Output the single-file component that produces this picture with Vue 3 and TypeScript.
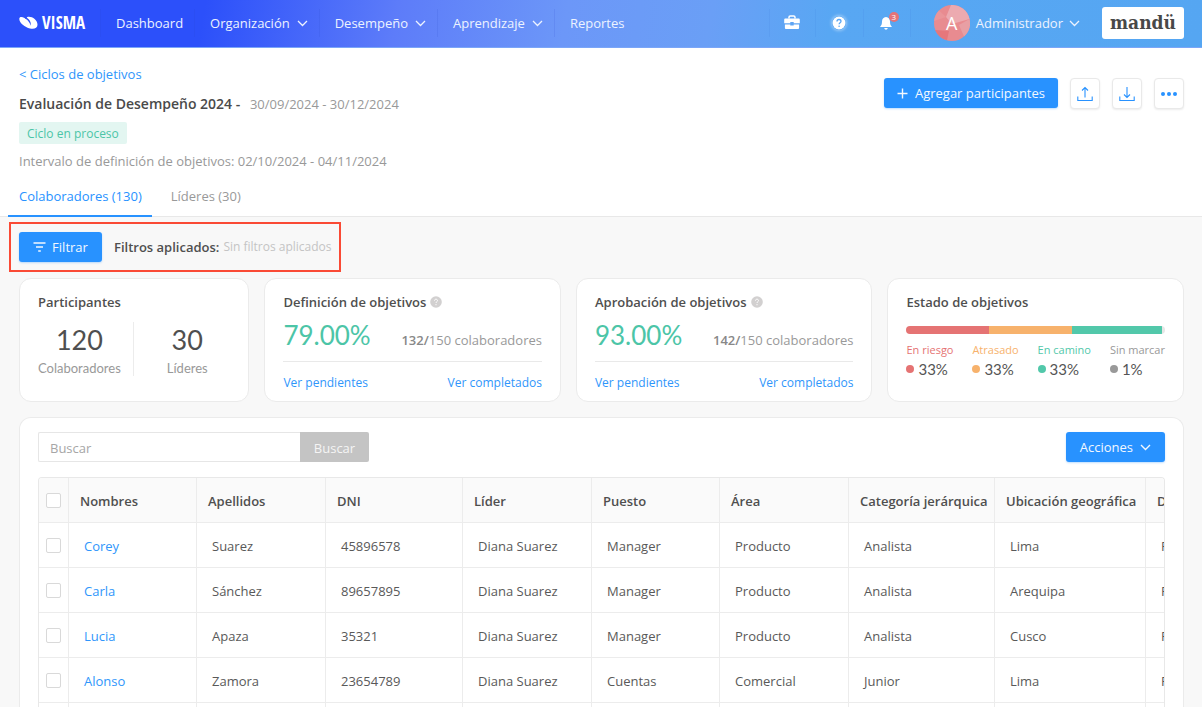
<script setup lang="ts">
import { ref } from 'vue'

interface NavItem { label: string; menu: boolean }
interface Goal { title: string; percent: string; done: number; total: number }
interface Status { label: string; value: number; share: number; tone: string }
interface Person { nombres: string; rest: string[] }

const nav: NavItem[] = [
  { label: 'Dashboard', menu: false },
  { label: 'Organización', menu: true },
  { label: 'Desempeño', menu: true },
  { label: 'Aprendizaje', menu: true },
  { label: 'Reportes', menu: false },
]

const goals: Goal[] = [
  { title: 'Definición de objetivos', percent: '79.00%', done: 132, total: 150 },
  { title: 'Aprobación de objetivos', percent: '93.00%', done: 142, total: 150 },
]

const statuses: Status[] = [
  { label: 'En riesgo', value: 33, share: 32, tone: 'red' },
  { label: 'Atrasado', value: 33, share: 32, tone: 'orange' },
  { label: 'En camino', value: 33, share: 35, tone: 'green' },
  { label: 'Sin marcar', value: 1, share: 1, tone: 'gray' },
]

const columns: string[] = [
  'Nombres', 'Apellidos', 'DNI', 'Líder', 'Puesto', 'Área',
  'Categoría jerárquica', 'Ubicación geográfica', 'D',
]

const people: Person[] = [
  { nombres: 'Corey', rest: ['Suarez', '45896578', 'Diana Suarez', 'Manager', 'Producto', 'Analista', 'Lima', 'P'] },
  { nombres: 'Carla', rest: ['Sánchez', '89657895', 'Diana Suarez', 'Manager', 'Producto', 'Analista', 'Arequipa', 'P'] },
  { nombres: 'Lucia', rest: ['Apaza', '35321', 'Diana Suarez', 'Manager', 'Producto', 'Analista', 'Cusco', 'P'] },
  { nombres: 'Alonso', rest: ['Zamora', '23654789', 'Diana Suarez', 'Cuentas', 'Comercial', 'Junior', 'Lima', 'P'] },
]

const search = ref('')
</script>

<template>
  <div class="page">
    <header class="topbar">
      <a class="brand" href="#">
        <svg width="19" height="14" viewBox="0 0 19 14" aria-hidden="true">
          <path d="M.3 3C.3.7 2.800.5 5.500 2.100L7.300 3.300 8 1.200C12-.3 18.500 3.500 18.500 8.800 18.500 12.200 15 13.500 11 12.500 6 11.300.3 7 .3 3z" fill="#fff" />
          <path d="M6.800 1.200C10.800 3.400 12.700 6.700 11.400 9.700 11.200 7 9.600 4.700 6 2.200z" fill="#2c50fa" />
        </svg>
        <span>VISMA</span>
      </a>
      <nav class="nav">
        <a v-for="item in nav" :key="item.label" class="nav-item" href="#">
          {{ item.label }}
          <svg v-if="item.menu" class="chevron" width="11" height="7" viewBox="0 0 11 7"><path d="M1 1l4.500 4.500L10 1" /></svg>
        </a>
      </nav>
      <div class="tools">
        <button class="tool" aria-label="Empresa">
          <svg width="16" height="15" viewBox="0 0 16 15">
            <path d="M5 3.500V2.300C5 1.500 5.500 1 6.300 1h3.400c.8 0 1.300.5 1.300 1.300v1.200" fill="none" stroke="#fff" stroke-width="1.500" />
            <path d="M1.500 3.500h13c.8 0 1.300.5 1.300 1.300v3.400H9.700V7H6.300v1.200H.2V4.800c0-.8.5-1.300 1.300-1.300zM.9 9.400h5.400v1h3.400v-1h5.400v3.300c0 .8-.5 1.300-1.300 1.300H2.200c-.8 0-1.300-.5-1.300-1.300z" fill="#fff" />
          </svg>
        </button>
        <button class="tool" aria-label="Ayuda">
          <svg class="help" width="14" height="14" viewBox="0 0 14 14">
            <circle cx="7" cy="7" r="6.500" fill="#fff" />
            <path d="M5 5.400C5 4.200 5.900 3.500 7 3.500s2 .7 2 1.800C9 6.700 7.100 6.700 7.100 8.300" fill="none" stroke="#5aa5f3" stroke-width="1.300" />
            <circle cx="7.100" cy="10.300" r=".8" fill="#5aa5f3" />
          </svg>
        </button>
        <button class="tool bell" aria-label="Notificaciones">
          <svg width="13" height="14" viewBox="0 0 13 14">
            <path d="M6 1c2.700.2 4 2 4 4.500 0 2.900.6 3.800 2 5.500H0c1.400-1.700 2-2.600 2-5.500C2 3 3.300 1.200 6 1zM4.300 12h3.400c-.1 1.100-.8 1.700-1.700 1.700S4.400 13.100 4.300 12z" fill="#fff" />
          </svg>
          <span class="count">3</span>
        </button>
      </div>
      <button class="user">
        <span class="avatar">
          <svg width="36" height="36" viewBox="0 0 36 36" aria-hidden="true">
            <circle cx="18" cy="18" r="18" fill="#e88b90" />
            <path d="M17 0A18 18 0 0 1 35.500 14L18 19 12 12z" fill="#ecaab0" />
            <path d="M25 20l10.500-6A18 18 0 0 1 30 31.500z" fill="#e89fa4" />
            <path d="M1 25l14 1-2 9.300A18 18 0 0 1 1 25z" fill="#e5777c" />
            <path d="M0 16L12 12 5 5.500A18 18 0 0 0 0 16z" fill="#ea9599" />
          </svg>
          <span class="initial">A</span>
        </span>
        Administrador
        <svg class="chevron" width="11" height="7" viewBox="0 0 11 7"><path d="M1 1l4.500 4.500L10 1" /></svg>
      </button>
      <span class="client">mandü</span>
    </header>

    <section class="head">
      <div class="intro">
        <a class="back" href="#">&lt; Ciclos de objetivos</a>
        <h1>Evaluación de Desempeño 2024 - <span>30/09/2024 - 30/12/2024</span></h1>
        <span class="tag">Ciclo en proceso</span>
        <p>Intervalo de definición de objetivos: 02/10/2024 - 04/11/2024</p>
      </div>
      <div class="actions">
        <button class="primary add">
          <svg width="11" height="11" viewBox="0 0 11 11"><path d="M5.500 .5v10M.5 5.500h10" /></svg>
          Agregar participantes
        </button>
        <button class="square" aria-label="Subir">
          <svg width="16" height="16" viewBox="0 0 16 16"><path d="M8 11.500V1.500M5 4.500l3-3 3 3M.8 10.500v4h14.400v-4" /></svg>
        </button>
        <button class="square" aria-label="Descargar">
          <svg width="16" height="16" viewBox="0 0 16 16"><path d="M8 1v10.500M5 8.500l3 3 3-3M.8 10.500v4h14.400v-4" /></svg>
        </button>
        <button class="square dots" aria-label="Más opciones">
          <svg width="16" height="4" viewBox="0 0 16 4"><circle cx="2" cy="2" r="2" /><circle cx="8" cy="2" r="2" /><circle cx="14" cy="2" r="2" /></svg>
        </button>
      </div>
    </section>

    <nav class="tabs">
      <a class="tab active" href="#">Colaboradores (130)</a>
      <a class="tab" href="#">Líderes (30)</a>
    </nav>

    <main class="content">
      <div class="filters">
        <button class="primary filter">
          <svg width="13" height="10" viewBox="0 0 13 10"><path d="M.5 1h12M3 5h7M5.200 9h2.600" /></svg>
          Filtrar
        </button>
        <strong>Filtros aplicados:</strong>
        <span>Sin filtros aplicados</span>
      </div>

      <div class="cards">
        <section class="card">
          <h2>Participantes</h2>
          <div class="people">
            <div class="figure"><b>120</b><span>Colaboradores</span></div>
            <div class="figure"><b>30</b><span>Líderes</span></div>
          </div>
        </section>

        <section v-for="goal in goals" :key="goal.title" class="card">
          <h2>
            {{ goal.title }}
            <svg width="12" height="12" viewBox="0 0 12 12" aria-hidden="true">
              <circle cx="6" cy="6" r="5.800" fill="#d2d0d0" />
              <path d="M4.500 4.700C4.500 3.700 5.200 3.200 6 3.200s1.500.5 1.500 1.400C7.500 5.800 6 5.700 6 7" fill="none" stroke="#fff" />
              <circle cx="6" cy="8.700" r=".6" fill="#fff" />
            </svg>
          </h2>
          <div class="score">
            <b>{{ goal.percent }}</b>
            <span><strong>{{ goal.done }}/</strong>{{ goal.total }} colaboradores</span>
          </div>
          <div class="links">
            <a href="#">Ver pendientes</a>
            <a href="#">Ver completados</a>
          </div>
        </section>

        <section class="card">
          <h2>Estado de objetivos</h2>
          <div class="bar">
            <i v-for="s in statuses" :key="s.label" :class="s.tone" :style="{ flexGrow: s.share }"></i>
          </div>
          <div class="legend">
            <div v-for="s in statuses" :key="s.label" :class="s.tone">
              <span>{{ s.label }}</span>
              <b>{{ s.value }}%</b>
            </div>
          </div>
        </section>
      </div>

      <section class="panel">
        <div class="toolbar">
          <form class="search" @submit.prevent>
            <input v-model="search" type="text" placeholder="Buscar" aria-label="Buscar" />
            <button type="submit">Buscar</button>
          </form>
          <button class="primary menu">
            Acciones
            <svg class="chevron" width="11" height="7" viewBox="0 0 11 7"><path d="M1 1l4.500 4.500L10 1" /></svg>
          </button>
        </div>
        <div class="table-wrap">
          <table>
            <colgroup>
              <col class="c-check" /><col class="c-s" /><col class="c-m" /><col class="c-l" /><col class="c-m" />
              <col class="c-s" /><col class="c-m" /><col class="c-xl" /><col class="c-xxl" /><col class="c-m" />
            </colgroup>
            <thead>
              <tr>
                <th class="check"><input type="checkbox" aria-label="Seleccionar todos" /></th>
                <th v-for="c in columns" :key="c">{{ c }}</th>
              </tr>
            </thead>
            <tbody>
              <tr v-for="p in people" :key="p.nombres">
                <td class="check"><input type="checkbox" :aria-label="p.nombres" /></td>
                <td><a href="#">{{ p.nombres }}</a></td>
                <td v-for="(v, i) in p.rest" :key="i">{{ v }}</td>
              </tr>
              <tr><td v-for="n in 10" :key="n"></td></tr>
            </tbody>
          </table>
        </div>
      </section>
    </main>
  </div>
</template>

<style>
body { margin: 0; }
</style>

<style scoped>
.page {
  display: flex;
  flex-direction: column;
  height: 100vh;
  overflow: hidden;
  background: #f8f8f8;
  color: #595959;
  font: 13px/20px "Open Sans", "Noto Sans", sans-serif;
}
.page * { box-sizing: border-box; }
a { color: #2f96fb; text-decoration: none; }
button { font: inherit; cursor: pointer; border: 0; padding: 0; background: none; color: inherit; }
h1, h2, p { margin: 0; }
.chevron { fill: none; stroke: currentColor; stroke-width: 1.3; flex: none; }

.topbar {
  flex: none;
  display: flex;
  align-items: center;
  height: 48px;
  padding: 0 18px 2px 19px;
  color: #edf3ff;
  border-bottom: 1px solid #7ba6f8;
  background: linear-gradient(100deg, #2c50fa 0%, #2c50fa 17%, #5d7cf9 33%, #6c97f8 47%, #6a9ff6 59%, #58a7f3 69%, #55a6f2 100%);
}
.brand { display: flex; align-items: center; gap: 4px; width: 81px; color: #fff; font: bold 17px/20px "Liberation Sans Narrow", "Open Sans Condensed", "DejaVu Sans Condensed", sans-serif; }
.nav { display: flex; }
.nav-item { display: flex; align-items: center; gap: 7px; height: 28px; padding: 0 11px 0 15px; color: inherit; border-left: 1px solid rgba(40, 70, 200, .13); }
.nav-item .chevron { margin-top: 2px; }
.tools { display: flex; margin-left: auto; }
.tool { position: relative; display: flex; align-items: center; justify-content: center; width: 48px; height: 28px; border-left: 1px solid rgba(40, 90, 200, .08); }
.tool:first-child { width: 46px; }
.tool:last-child { border-right: 1px solid rgba(40, 90, 200, .08); }
.help { border-radius: 50%; box-shadow: 0 0 3px 1px rgba(255, 255, 255, .4); }
.count { position: absolute; left: 25px; top: 3px; width: 10px; height: 10px; border-radius: 50%; background: #e57377; color: #fff; font-size: 8px; line-height: 10px; text-align: center; }
.user { display: flex; align-items: center; gap: 6px; margin-left: 23px; }
.user .chevron { margin-top: 2px; }
.avatar { display: grid; place-items: center; height: 36px; }
.avatar > * { grid-area: 1 / 1; }
.initial { font-size: 18px; color: #fff; }
.client { margin-left: 22px; width: 82px; height: 32px; border-radius: 3px; background: #fff; color: #484848; font: bold 19px/31px "DejaVu Serif Condensed", "DejaVu Serif", serif; text-align: center; }

.head { flex: none; display: flex; justify-content: space-between; padding: 16px 18px 0 19px; background: #fff; }
.intro { display: flex; flex-direction: column; align-items: flex-start; }
h1 { margin-top: 10px; font-size: 14px; font-weight: 600; line-height: 20px; color: #4a4a4a; }
h1 span { margin-left: 6px; font-size: 13px; font-weight: 400; color: #999; }
.tag { margin-top: 8px; padding: 0 8px; height: 22px; line-height: 23px; font-size: 12px; border-radius: 2px; background: #e3f6f1; color: #4cc5a7; }
.intro p { margin-top: 7px; color: #999; }
.actions { display: flex; gap: 12px; margin-top: 14px; }
.primary { display: flex; align-items: center; justify-content: center; height: 30px; border-radius: 3px; background: #2892ff; color: #f2f8ff; box-shadow: 0 1px 2px rgba(40, 146, 255, .3); }
.primary svg { fill: none; stroke: currentColor; stroke-width: 1.4; }
.add { gap: 7px; padding: 0 13px; }
.square { display: flex; align-items: center; justify-content: center; width: 30px; height: 31px; border: 1px solid #e9e9e9; border-radius: 4px; background: #fff; box-shadow: 0 1px 2px rgba(0, 0, 0, .08); }
.square svg { fill: none; stroke: #2892ff; stroke-width: 1.1; }
.dots svg { fill: #2892ff; stroke: none; }

.tabs { flex: none; display: flex; gap: 8px; padding: 10px 8px 0; background: #fff; border-bottom: 1px solid #e8e8e8; }
.tab { height: 36px; padding: 5px 10px 0 11px; margin-bottom: -1px; color: #999; }
.tab.active { color: #2892ff; border-bottom: 2px solid #2892ff; }

.content { flex: 1; display: flex; flex-direction: column; min-height: 0; padding: 5px 18px 0 9px; }
.filters { flex: none; align-self: flex-start; display: flex; align-items: center; height: 50px; padding: 0 7px 0 8px; border: 2px solid #fa4a35; color: #c4c4c4; font-size: 12px; }
.filters strong { margin: 0 4px 0 12px; font-size: 13px; font-weight: 600; color: #4f4f4f; }
.filter { gap: 6px; width: 83px; font-size: 13px; }

.cards { flex: none; display: grid; grid-template-columns: 230fr 296fr 296fr 296fr; gap: 15px; margin: 6px 0 0 10px; }
.card { height: 124px; padding: 13px 18px 0; border: 1px solid #ebebeb; border-radius: 12px; background: #fff; min-width: 0; }
h2 { display: flex; align-items: center; gap: 4px; font-size: 13px; font-weight: 600; line-height: 20px; color: #4f4f4f; }
.people { display: flex; margin-top: 10px; }
.figure { display: flex; flex-direction: column; align-items: center; height: 54px; color: #999; }
.figure:first-child { padding-right: 12px; border-right: 1px solid #ececec; }
.figure:last-child { padding-left: 33px; }
.figure b { font: 27px/36px Lato, sans-serif; color: #4f4f4f; }
.figure span { font-family: Lato, sans-serif; font-size: 13px; }
.score { display: flex; justify-content: space-between; align-items: baseline; height: 50px; border-bottom: 1px solid #e9e9e9; color: #999; }
.score > b { font: 26px/46px Lato, sans-serif; color: #4cc5a7; }
.score strong { font-weight: 600; color: #888; }
.links { display: flex; justify-content: space-between; margin-top: 11px; font-size: 12px; }

.bar { display: flex; height: 8px; margin-top: 14px; border-radius: 4px; overflow: hidden; }
.bar i { flex-basis: 0; }
.bar .red { background: #e57373; }
.bar .orange { background: #f7b26c; }
.bar .green { background: #52c8aa; }
.bar .gray { background: #e6e6e6; }
.legend { display: flex; justify-content: space-between; margin-top: 7px; }
.legend span { display: block; font-size: 11px; line-height: 18px; }
.legend b { display: flex; align-items: center; gap: 4px; font: 15px/20px Lato, sans-serif; color: #555; }
.legend b::before { content: ""; width: 8px; height: 8px; border-radius: 50%; }
.legend .red { color: #e57373; }
.legend .orange { color: #f7b26c; }
.legend .green { color: #52c8aa; }
.legend .gray { color: #999; }
.legend .red b::before { background: #e57373; }
.legend .orange b::before { background: #f7b26c; }
.legend .green b::before { background: #52c8aa; }
.legend .gray b::before { background: #999; }

.panel { flex: 1; min-height: 0; margin: 15px 0 0 10px; padding: 14px 18px 0; border: 1px solid #ebebeb; border-bottom: 0; border-radius: 12px 12px 0 0; background: #fff; }
.toolbar { display: flex; justify-content: space-between; }
.search { display: flex; height: 30px; }
.search input { width: 262px; padding: 2px 11px 0; border: 1px solid #e6e6e6; border-right: 0; border-radius: 2px 0 0 2px; font: inherit; color: #555; outline: 0; }
.search input::placeholder { color: #a6a6a6; opacity: 1; }
.search button { width: 69px; padding-top: 1px; border-radius: 0 2px 2px 0; background: #c4c4c4; color: #f5f5f5; }
.menu { gap: 7px; padding: 0 14px; }
.table-wrap { margin-top: 15px; border: 1px solid #e8e8e8; border-bottom: 0; border-radius: 4px 4px 0 0; overflow: hidden; }
table { width: 1234px; table-layout: fixed; border-collapse: separate; border-spacing: 0; }
.c-check { width: 30px; }
.c-s { width: 128px; }
.c-m { width: 129px; }
.c-l { width: 137px; }
.c-xl { width: 146px; }
.c-xxl { width: 151px; }
th, td { height: 45px; padding: 2px 0 0 15px; border-right: 1px solid #ececec; border-bottom: 1px solid #ececec; text-align: left; white-space: nowrap; }
th { padding-left: 11px; background: #fafafa; font-weight: 600; color: #4f4f4f; }
.check { padding: 0 0 0 7px; }
.check input { display: block; appearance: none; width: 15px; height: 15px; margin: 0; border: 1px solid #d9d9d9; border-radius: 2px; background: #fff; }
</style>
